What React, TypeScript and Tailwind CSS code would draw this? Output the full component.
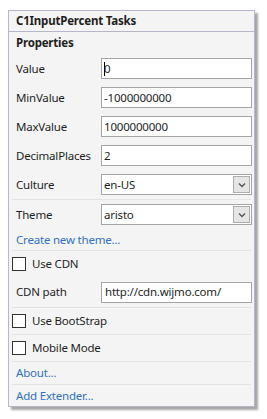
import React from "react";

const font = { fontFamily: '"Segoe UI", "Noto Sans", sans-serif' };

function Sep() {
  return <div className="mx-[3px] h-px bg-[#e4e4e8]" />;
}

function TextRow({ label, value, caret }: { label: string; value: string; caret?: boolean }) {
  return (
    <div className="flex h-[29px] items-center">
      <div className="w-[85px] shrink-0 text-[#1e1e1e]">{label}</div>
      <div className="flex h-[21px] w-[151px] items-center border border-[#a5a5a5] bg-white pl-[2px] text-[#1e1e1e]">
        {caret && <span className="mr-[-1px] inline-block h-[14px] w-px bg-black" />}
        <span>{value}</span>
      </div>
    </div>
  );
}

function SelectRow({ label, value }: { label: string; value: string }) {
  return (
    <div className="flex h-[29px] items-center">
      <div className="w-[85px] shrink-0 text-[#1e1e1e]">{label}</div>
      <div className="flex h-[21px] w-[151px] items-center justify-between border border-[#a5a5a5] bg-white pl-[2px] pr-[1px] text-[#1e1e1e]">
        <span>{value}</span>
        <div className="flex h-[17px] w-[17px] items-center justify-center border border-[#adadad] bg-[#e5e5e5]">
          <svg width="8" height="6" viewBox="0 0 8 6">
            <path d="M1 1.5 L4 4.5 L7 1.5" fill="none" stroke="#555" strokeWidth="1.4" />
          </svg>
        </div>
      </div>
    </div>
  );
}

function CheckRow({ label, h }: { label: string; h: string }) {
  return (
    <div className={`flex ${h} items-center`}>
      <div className="ml-[-4px] h-[14px] w-[14px] border border-[#333] bg-white" />
      <span className="ml-[6px] text-[#1e1e1e]">{label}</span>
    </div>
  );
}

export default function App() {
  return (
    <div className="h-[419px] w-[267px] bg-white pl-[8px] pt-[10px] text-[11.5px] tracking-[-0.2px]" style={font}>
      <div className="w-[247px] border border-[#b7b7cc] bg-[#f4f4f4] shadow-[3px_3px_2px_rgba(0,0,0,0.35)]">
        <div className="flex h-[21px] items-center border-b border-[#b7b7cc] pl-[7px] font-bold text-[#1e1e1e]">
          C1InputPercent Tasks
        </div>
        <div className="flex h-[22px] items-center pl-[7px] font-bold text-[#1e1e1e]">Properties</div>
        <div className="pl-[7px]">
          <TextRow label="Value" value="0" caret />
          <TextRow label="MinValue" value="-1000000000" />
          <TextRow label="MaxValue" value="1000000000" />
          <TextRow label="DecimalPlaces" value="2" />
          <SelectRow label="Culture" value="en-US" />
        </div>
        <Sep />
        <div className="pl-[7px]">
          <SelectRow label="Theme" value="aristo" />
          <div className="flex h-[21px] items-center text-[#2f72c4]">Create new theme...</div>
        </div>
        <Sep />
        <div className="pl-[7px]">
          <CheckRow label="Use CDN" h="h-[26px]" />
          <div className="flex h-[30px] items-center">
            <div className="w-[85px] shrink-0 text-[#1e1e1e]">CDN path</div>
            <div className="flex h-[21px] w-[151px] items-center border border-[#a5a5a5] bg-white pl-[3px] text-[#1e1e1e]">
              http://cdn.wijmo.com/
            </div>
          </div>
        </div>
        <Sep />
        <div className="pl-[7px]">
          <CheckRow label="Use BootStrap" h="h-[26px]" />
        </div>
        <Sep />
        <div className="pl-[7px]">
          <CheckRow label="Mobile Mode" h="h-[26px]" />
        </div>
        <Sep />
        <div className="flex h-[22px] items-center pl-[7px] text-[#2f72c4]">About...</div>
        <Sep />
        <div className="flex h-[21px] items-center pl-[7px] text-[#2f72c4]">Add Extender...</div>
      </div>
    </div>
  );
}
